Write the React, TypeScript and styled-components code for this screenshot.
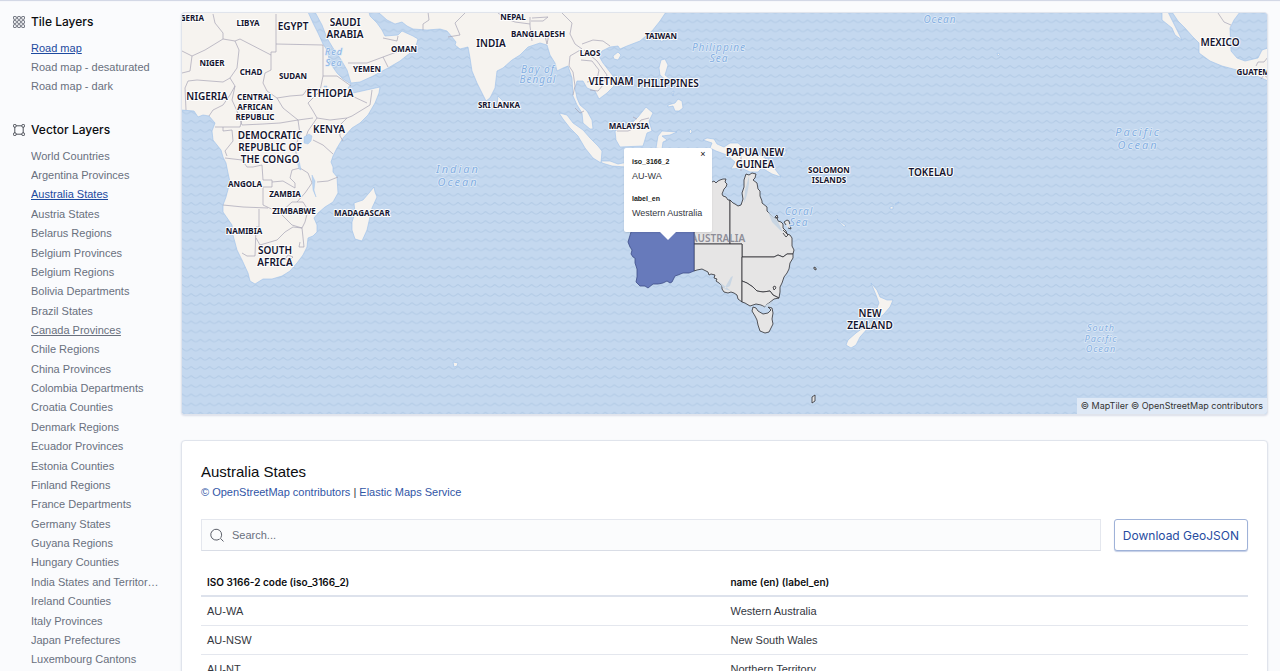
import React from "react";
import styled, { createGlobalStyle } from "styled-components";

const GlobalStyle = createGlobalStyle`
  * { box-sizing: border-box; }
  html { scrollbar-width: none; }
  body {
    margin: 0;
    background: #fafbfd;
    color: #343741;
    font-family: "Liberation Sans", Arial, sans-serif;
    font-size: 11px;
    line-height: 16px;
  }
`;

const Page = styled.div`
  display: grid;
  grid-template-columns: 168px minmax(0, 1fr);
  padding: 12px 12px 12px 13px;
  box-shadow: inset 0 2px 1px -1px #cfd4e4;
`;

const Sidebar = styled.nav`
  display: flex;
  flex-direction: column;
  gap: 24px;
  padding-right: 20px;
`;

const NavGroup = styled.section`
  display: grid;
  grid-template-columns: 12px minmax(0, 1fr);
  column-gap: 6px;
  row-gap: 6px;
  align-items: center;
`;

const NavTitle = styled.h2`
  margin: 0;
  color: #0c0d10;
  font-family: Inter, "Liberation Sans", sans-serif;
  font-size: 12px;
  font-weight: 500;
  line-height: 20px;
`;

const NavList = styled.ul<{ $minHeight: number }>`
  display: grid;
  grid-column: 2;
  grid-auto-rows: 1fr;
  align-items: center;
  min-height: ${(p) => p.$minHeight}px;
  margin: 0;
  padding: 0;
  list-style: none;
`;

const NavItem = styled.li`
  min-width: 0;
  line-height: 16px;
`;

const NavLink = styled.a<{ $active?: boolean; $underlined?: boolean }>`
  display: block;
  overflow: hidden;
  color: ${(p) => (p.$active ? "#1d4a9f" : "#69707d")};
  text-decoration: ${(p) => (p.$active || p.$underlined ? "underline" : "none")};
  text-overflow: ellipsis;
  white-space: nowrap;
  &:hover { text-decoration: underline; }
`;

const Main = styled.main`
  display: flex;
  flex-direction: column;
  gap: 25px;
  min-width: 0;
`;

const Panel = styled.section`
  border: 1px solid #e0e4ec;
  border-radius: 4px;
  background: #fff;
  box-shadow: 0 1px 2px #d9dde8;
`;

const MapPanel = styled(Panel)`
  position: relative;
  height: 403px;
  overflow: hidden;
  background: #c4d8ef;
`;

const MapDrawing = styled.svg`
  display: block;
  width: 100%;
  height: 100%;
`;

const Attribution = styled.p`
  position: absolute;
  right: 0;
  bottom: 0;
  margin: 0;
  padding: 0 4px;
  background: #dfe9f6;
  color: #333;
  font-family: Inter, "Liberation Sans", sans-serif;
  font-size: 9px;
  line-height: 16px;
`;

const Popup = styled.div`
  position: absolute;
  top: 135px;
  left: 442px;
  width: 88px;
  padding: 7px 8px 12px;
  border-radius: 2px;
  background: #fff;
  box-shadow: 0 1px 2px #0000001a;
  &::after {
    content: "";
    position: absolute;
    top: 100%;
    left: 36px;
    border: 8px solid transparent;
    border-top-color: #fff;
    border-bottom-width: 0;
  }
`;

const PopupClose = styled.button`
  position: absolute;
  top: 0;
  right: 3px;
  width: 12px;
  height: 12px;
  padding: 0;
  border: 0;
  background: none;
  color: #111;
  font-size: 9px;
  line-height: 12px;
`;

const PopupList = styled.dl`
  margin: 0;
  line-height: 14px;
  dt {
    color: #1a1c21;
    font-size: 7px;
    font-weight: 700;
  }
  dd {
    margin: 0;
    font-size: 9px;
    white-space: nowrap;
  }
  dd + dt { margin-top: 9px; }
`;

const Details = styled(Panel)`
  padding: 20px 19px;
`;

const Title = styled.h1`
  margin: 0;
  color: #0c0d10;
  font-size: 15px;
  font-weight: 400;
  line-height: 22px;
`;

const Credits = styled.p`
  margin: 0;
  line-height: 18px;
  a { color: #3156a6; text-decoration: none; }
`;

const Toolbar = styled.div`
  display: flex;
  gap: 13px;
  margin: 18px 0 17px;
`;

const SearchBox = styled.label`
  display: flex;
  flex: 1;
  align-items: center;
  gap: 8px;
  height: 32px;
  padding: 0 8px;
  border: 1px solid #e4e7ee;
  border-bottom-color: #d9dde6;
  background: #fbfcfd;
`;

const SearchInput = styled.input`
  flex: 1;
  min-width: 0;
  padding: 0;
  border: 0;
  outline: 0;
  background: none;
  font: inherit;
  &::placeholder { color: #69707d; opacity: 1; }
`;

const DownloadButton = styled.button`
  height: 32px;
  padding: 0 8px;
  border: 1px solid #9fb2d8;
  border-radius: 3px;
  background: #fff;
  box-shadow: 0 1px 1px #c3cee6;
  color: #274c9f;
  font: 400 12px Inter, "Liberation Sans", sans-serif;
`;

const DataTable = styled.table`
  width: 100%;
  border-collapse: separate;
  border-spacing: 0;
  table-layout: fixed;
  th, td { height: 29px; padding: 0 6px; text-align: left; }
  th {
    border-bottom: 2px solid #dde2ec;
    color: #0c0d10;
    font-family: Inter, "Liberation Sans", sans-serif;
    font-size: 10px;
    font-weight: 600;
  }
  td { border-bottom: 1px solid #e4e7ee; }
`;

const Land = styled.path`
  fill: #f6f3ef;
  stroke: #9cc0ea;
  stroke-width: 0.6;
`;

const Border = styled.path`
  fill: none;
  stroke: #a6a3b4;
  stroke-width: 0.7;
  stroke-linejoin: round;
`;

const Lake = styled.path`
  fill: #bcd5f0;
  stroke: #9cc0ea;
  stroke-width: 0.4;
`;

const State = styled.path<{ $selected?: boolean }>`
  fill: ${(p) => (p.$selected ? "#677abb" : "#e6e5e5")};
  stroke: ${(p) => (p.$selected ? "#3d4c86" : "#2f2f33")};
  stroke-width: 0.8;
  stroke-linejoin: round;
`;

const Country = styled.text<{ $size: number; $faded?: boolean }>`
  fill: ${(p) => (p.$faded ? "#8e8e98" : "#14142e")};
  stroke: ${(p) => (p.$faded ? "none" : "#fffffff0")};
  stroke-width: 2px;
  stroke-linejoin: round;
  paint-order: stroke;
  font-family: "Noto Sans", sans-serif;
  font-size: ${(p) => p.$size}px;
  font-weight: ${(p) => (p.$size > 8 ? 600 : 700)};
  text-anchor: middle;
`;

const Sea = styled.text<{ $size: number }>`
  fill: #84afe2;
  stroke: #dfeaf7;
  stroke-width: 1.5px;
  stroke-linejoin: round;
  paint-order: stroke;
  font-family: "Noto Sans", sans-serif;
  font-size: ${(p) => p.$size}px;
  font-style: italic;
  letter-spacing: ${(p) => (p.$size > 10 ? 2 : 1)}px;
  text-anchor: middle;
`;

const landShapes = [
  // Africa
  "M181 12H308L313 23L318 33L323 44L327 50L330 63L337 73L343 79L351 84L348 88L353 93L362 91L380 87L379 93L375 103L368 115L360 123L352 128L343 138L337 148L333 156L331 162L333 167V172L337 177L338 193L333 202L325 207L318 213L314 218L317 225V232L313 236L308 238L307 247L303 255L297 263L290 271L282 276L272 279H263L255 284L250 281L248 273L242 260L237 250L233 235L232 225L223 212V205L226 197L230 182L228 173L226 163L223 157L221 150L213 140L212 131L215 123L209 116L203 115L198 117L194 111L181 110Z",
  // Madagascar
  "M374 187L375 192L377 197L372 208L367 230L362 241L355 239L352 230V222L355 213L354 203L363 200L369 193Z",
  // Arabian peninsula
  "M315 12L322 25L327 38L333 48L340 58L347 70L351 83L360 82L373 76L388 68L400 61L410 53L416 46L418 39L413 36L402 31L398 35L385 36L382 30L377 23L370 16L369 12Z",
  // Southern and eastern Asia
  "M378 12L387 20L395 24L402 22L407 26L413 29L427 30L440 29L447 31L452 37L456 42L455 45L460 49L468 47L470 58L472 71L477 83L482 93L486 101L490 98L495 88L497 71L503 68L512 60L520 55L528 47L540 43L547 45L550 55L555 63L557 71L563 68L568 66L572 78L573 96L577 105L582 113L583 123L590 129H593L592 120L587 111L580 105L577 98L575 88L577 81H583L587 88L595 91L599 99L607 93L614 86L613 76L603 63L599 56L602 51L610 47L618 46L620 49L627 46L640 41L652 31L660 21L666 12Z",
  // Sri Lanka, Hainan, Taiwan
  "M498 96L503 101V108L499 110L497 105Z",
  "M613 56L618 52L621 55L618 60L614 59Z",
  "M660 36L664 32L663 41L661 42Z",
  // Philippines
  "M661 60L665 59L668 65L665 75L670 79L668 82L660 75L659 68Z",
  "M669 84L673 85L671 89ZM676 80L679 83L677 87ZM672 92L674 91L673 96ZM665 82L668 83L666 85Z",
  "M668 105L675 103L678 99L682 101L683 108L679 111H675L673 106L668 107Z",
  // Sumatra, Java and the islands to the east
  "M559 113L567 115L573 123L583 130L590 138L598 146L602 151L601 163L593 158L585 148L578 136L570 128L563 119Z",
  "M601 161H610L618 164L628 162L632 166L626 167L612 166L602 163Z",
  "M615 131L620 128L630 125L638 117L646 107L653 113L649 121L652 131L647 133L643 146L620 147L616 140Z",
  "M658 136L662 131L677 132L670 135L662 136L667 140L663 142L662 149L656 148Z",
  "M690 129L692 131L691 134L689 132Z",
  // New Guinea and New Britain
  "M703 140L707 138L714 139L717 144L724 147L730 143H738L744 148L755 152L765 158L768 163L775 169L781 177L772 174L762 168L758 172H750L741 168L731 169L735 162L727 155L716 151L710 148L712 143Z",
  "M775 157L785 155L787 150L784 152L775 155Z",
  // Pacific islands
  "M800 159L802 162L800 161Z",
  "M837 219L846 226L844 227Z",
  "M890 207L893 206V209L890 209ZM895 204L899 202L896 204Z",
  "M997 53L1000 54L998 56Z",
  "M453 362L458 363L457 366L454 367Z",
  // New Zealand
  "M871 283L877 290L880 297L887 300H893L890 307L883 315L878 318L874 313L877 308L879 303L876 295Z",
  "M873 320L868 328L860 337L856 345L851 348L846 345L848 340L856 333L867 325Z",
  // Mexico
  "M1172 12L1178 21L1185 28L1192 36L1199 43V53L1210 61L1222 66L1237 70L1257 76L1268 81V48L1262 50L1258 58L1245 61L1237 58L1231 51L1230 28L1234 20L1240 12Z",
  "M1162 12H1168L1174 24L1182 40L1175 35L1172 28L1162 20Z",
];

const borders =
  "M213 14L215 23L223 33V39L205 50L192 56L182 51M223 39L235 41L240 39L271 55V52H276V14M276 44L323 45V76L320 91L308 103L313 111L317 118L330 120L347 118L352 116L370 105L372 90M323 76H337L351 86M352 96L367 103" +
  "M271 55V70L265 73L263 83L267 91L277 98L290 96L303 95L308 88L313 91M235 41L239 50L237 68L230 78L223 82L210 81L197 80L188 81L185 88L186 110M192 56L190 71L182 73" +
  "M230 78L235 86L230 95L223 105L213 110L209 116M235 86L232 100L237 111L242 125L263 124L280 123L298 120L283 108L277 98M298 120L313 118M215 127H240L242 119M223 127V131L232 130L233 141L225 151L227 156M317 118L308 131L305 140" +
  "M313 140L323 145L333 154M347 118L340 125V136L343 141M298 120L300 134L296 145V153" +
  "M225 158L242 160L247 167H253L262 165L263 180H272V187H263V205L280 213L292 202H303L308 210L305 222L302 228L292 225L285 218L280 213M223 205L243 207L268 208M259 209V227H256L255 256H247L242 253M256 238L260 245L277 240L285 232L293 227L302 228L304 247H299L300 242" +
  "M272 182L283 181L295 188V183L290 178L292 170L300 168L308 173L312 183L305 193L297 202M317 182L328 181L338 177M288 255L293 257L289 261L285 259Z" +
  "M348 63H367L383 57L402 50M383 57L388 67M383 38L397 41L398 36M428 12L429 20L423 24V30" +
  "M465 13L455 23L460 35L448 37M498 13L507 19L515 22L530 24M530 17V26L532 41M531 21H543L548 17L532 18M545 36L547 44L549 34M562 13L572 23L570 34L575 44L582 49L570 56L569 66L573 72L575 86L573 95M582 44L593 40L603 41L610 46M584 50L597 61L607 75L604 82M581 60L592 61L599 70L597 80L587 82M575 108L580 113L584 111M590 90L598 91L603 85" +
  "M617 131H628L635 128L641 120L649 118M633 117L637 119M741 147V171M1218 13L1224 22L1231 25M1256 66L1258 62H1264L1268 57M1261 79L1264 75L1268 78";

const lakes = [
  "M304 137L309 134L312 136L311 141L308 144L304 143Z",
  "M296 153L299 160L301 170L299 169L297 161Z",
  "M312 175L315 181L314 190L316 197L313 190Z",
  "M324 86H327V87H324Z",
];

const australia = [
  "M694 182L712 182L714 181L716 183L718 181L720 180L723 179L726 179L725 182L727 184L726 187L724 189L722 194L723 196L726 197L728 200L730 200V244H694Z",
  "M730 200L733 203L735 204L738 206L741 205L743 199L742 193L744 187L744 180L746 174L749 175L752 173L756 174L755 178L753 180L757 183L758 189L760 191L760 196L762 201L762 203L767 207L767 211L770 214L772 216L774 218L777 218L778 221L781 222L783 224L783 228L786 231L787 234L790 235L792 238L792 246L794 250L793 254L787 254L783 257L778 255L774 257L742 257V244H730Z",
  "M694 244H742V302L738 299L737 295L734 293L731 292L728 293L724 292L722 289L722 286L719 283L716 281L717 279L714 278L715 275L711 274L709 275L708 272L704 270L702 269L697 270L694 271Z",
  "M742 257H774L778 255L783 257L787 254L793 254L793 258L790 263L789 269L787 273L784 277L782 283L780 287L780 292L779 298L773 295L770 291L763 292L757 291L753 287L750 285L747 283L742 281Z",
  "M742 281L747 283L750 285L753 287L757 291L763 292L770 291L773 295L779 298L774 299L769 303L766 305L765 307L761 305L756 304L750 306L745 303L742 302Z",
  "M753 307L756 308L758 311L763 314L768 313L771 310L768 307L772 308L773 313L772 319L773 324L771 328L769 332L765 333L760 331L758 325L757 320L755 316L752 311Z",
  "M775 286L776 288L774 290L773 287ZM775 217L777 215L778 218ZM784 222L787 220L789 221L791 229L788 228M786 225L784 222",
  "M783 230L788 235L786 237L783 233M814 267L816 268L816 270L814 269ZM812 397L815 395V401L812 403Z",
];

const shallows =
  "M749 176L745 190L744 203L747 195L749 184ZM768 212L777 220L783 232L780 230L772 222ZM731 277L733 276L730 286L724 289ZM718 281L724 289L731 291L726 287ZM755 305L762 307L773 301L768 307Z";

type Label = [string, number, number, number];

const countryLabels: Label[] = [
  ["ALGERIA", 187, 21, 8], ["LIBYA", 248, 26, 8], ["EGYPT", 293, 30, 10],
  ["SAUDI", 345, 26, 10], ["ARABIA", 345, 38, 10], ["OMAN", 404, 52, 8],
  ["NIGER", 212, 66, 8], ["CHAD", 251, 75, 8], ["SUDAN", 293, 79, 8], ["YEMEN", 367, 72, 8],
  ["NIGERIA", 207, 100, 10], ["CENTRAL", 255, 100, 8], ["AFRICAN", 255, 110, 8], ["REPUBLIC", 255, 120, 8],
  ["ETHIOPIA", 330, 97, 10], ["KENYA", 329, 133, 10],
  ["DEMOCRATIC", 270, 139, 10], ["REPUBLIC OF", 270, 151, 10], ["THE CONGO", 270, 163, 10],
  ["ANGOLA", 245, 187, 8], ["ZAMBIA", 285, 197, 8], ["ZIMBABWE", 294, 214, 8],
  ["MADAGASCAR", 362, 216, 8], ["NAMIBIA", 244, 234, 8], ["SOUTH", 275, 254, 10], ["AFRICA", 275, 266, 10],
  ["NEPAL", 513, 20, 8], ["BANGLADESH", 538, 37, 8], ["INDIA", 491, 47, 10], ["LAOS", 590, 56, 8],
  ["TAIWAN", 661, 39, 8], ["VIETNAM", 611, 85, 10], ["PHILIPPINES", 668, 87, 10], ["SRI LANKA", 499, 108, 8],
  ["MALAYSIA", 629, 129, 8], ["PAPUA NEW", 755, 156, 10], ["GUINEA", 755, 168, 10],
  ["SOLOMON", 829, 173, 8], ["ISLANDS", 829, 183, 8], ["TOKELAU", 931, 176, 10],
  ["NEW", 870, 317, 10], ["ZEALAND", 870, 329, 10], ["MEXICO", 1220, 46, 10], ["GUATEMALA", 1261, 75, 8],
];

const seaLabels: Label[] = [
  ["Red", 334, 55, 9], ["Sea", 334, 66, 9], ["Bay of", 538, 73, 10], ["Bengal", 538, 83, 10],
  ["Philippine", 719, 51, 10], ["Sea", 719, 62, 10], ["Indian", 458, 173, 11], ["Ocean", 458, 186, 11],
  ["Coral", 799, 215, 10], ["Sea", 799, 226, 10], ["Ocean", 940, 23, 10],
  ["Pacific", 1138, 136, 11], ["Ocean", 1138, 149, 11],
  ["South", 1101, 331, 9], ["Pacific", 1101, 342, 9], ["Ocean", 1101, 352, 9],
];

const WorldMap = () => (
  <MapDrawing viewBox="182 13 1085 401" preserveAspectRatio="xMinYMin slice" role="img" aria-label="Map">
    <defs>
      <pattern id="waves" x="182" y="16" width="9.2" height="9.12" patternUnits="userSpaceOnUse">
        <path d="M0 4.2C1.4 4.4 2 6.6 4.6 6.6S7.8 4.4 9.2 4.2" fill="none" stroke="#b3cbe6" strokeWidth="1.1" />
      </pattern>
    </defs>
    <rect x="182" y="13" width="100%" height="100%" fill="#c4d8ef" />
    <rect x="182" y="13" width="100%" height="100%" fill="url(#waves)" />
    {landShapes.map((d) => <Land key={d} d={d} />)}
    <Border d={borders} />
    {lakes.map((d) => <Lake key={d} d={d} />)}
    {australia.map((d) => <State key={d} d={d} />)}
    <path d={shallows} fill="#c9d6e3" />
    <Country $size={10} $faded x={718} y={242}>AUSTRALIA</Country>
    <State $selected d="M694 225H634L631 232L628 242L630 247L632 250L631 254L633 257L635 258L635 263L637 269L637 277L636 282L640 286L645 286L648 288L653 284L658 284L663 283L667 281L670 283L672 282L675 276L678 275L683 273L689 273L694 271Z" />
    {seaLabels.map(([name, x, y, size]) => <Sea key={name + x + y} x={x} y={y} $size={size}>{name}</Sea>)}
    {countryLabels.map(([name, x, y, size]) => <Country key={name + x + y} x={x} y={y} $size={size}>{name}</Country>)}
  </MapDrawing>
);

const TilesIcon = () => (
  <svg width="12" height="12" viewBox="0 0 12 12" fill="none" stroke="#5a5f6b" strokeWidth="0.9" aria-hidden="true">
    {[0.5, 4.6, 8.7].map((y) => [0.5, 4.6, 8.7].map((x) => (
      <rect key={`${x} ${y}`} x={x} y={y} width="2.8" height="2.8" rx="0.6" />
    )))}
  </svg>
);

const VectorIcon = () => (
  <svg width="12" height="12" viewBox="0 0 12 12" fill="none" stroke="#3c404a" strokeWidth="0.9" aria-hidden="true">
    <path d="M3 1.8H9M3 10.2H9M1.8 3V9M10.2 3V9" />
    {[0.5, 8.9].map((y) => [0.5, 8.9].map((x) => (
      <rect key={`${x} ${y}`} x={x} y={y} width="2.6" height="2.6" rx="0.8" fill="#fafbfd" />
    )))}
  </svg>
);

const SearchIcon = () => (
  <svg width="14" height="14" viewBox="0 0 14 14" fill="none" stroke="#4a4e59" strokeWidth="0.9" strokeLinecap="round" aria-hidden="true">
    <path d="M9.3 11.3A5.5 5.5 0 1 1 11 9.5M10.6 10.5L13.2 13.2" />
  </svg>
);

const tileLayers = ["Road map", "Road map - desaturated", "Road map - dark"];

const vectorLayers = [
  "World Countries", "Argentina Provinces", "Australia States", "Austria States", "Belarus Regions",
  "Belgium Provinces", "Belgium Regions", "Bolivia Departments", "Brazil States", "Canada Provinces",
  "Chile Regions", "China Provinces", "Colombia Departments", "Croatia Counties", "Denmark Regions",
  "Ecuador Provinces", "Estonia Counties", "Finland Regions", "France Departments", "Germany States",
  "Guyana Regions", "Hungary Counties", "India States and Territories", "Ireland Counties",
  "Italy Provinces", "Japan Prefectures", "Luxembourg Cantons",
];

const rows = [
  ["AU-WA", "Western Australia"],
  ["AU-NSW", "New South Wales"],
  ["AU-NT", "Northern Territory"],
];

interface LayerGroupProps {
  title: string;
  icon: React.ReactNode;
  layers: string[];
  active: string;
  underlined?: string;
  minHeight: number;
}

const LayerGroup = ({ title, icon, layers, active, underlined, minHeight }: LayerGroupProps) => (
  <NavGroup>
    {icon}
    <NavTitle>{title}</NavTitle>
    <NavList $minHeight={minHeight}>
      {layers.map((name) => (
        <NavItem key={name}>
          <NavLink href="#" $active={name === active} $underlined={name === underlined}>{name}</NavLink>
        </NavItem>
      ))}
    </NavList>
  </NavGroup>
);

export default function App() {
  return (
    <>
      <GlobalStyle />
      <Page>
        <Sidebar aria-label="Layers">
          <LayerGroup title="Tile Layers" icon={<TilesIcon />} layers={tileLayers} active="Road map" minHeight={58} />
          <LayerGroup
            title="Vector Layers"
            icon={<VectorIcon />}
            layers={vectorLayers}
            active="Australia States"
            underlined="Canada Provinces"
            minHeight={523}
          />
        </Sidebar>
        <Main>
          <MapPanel>
            <WorldMap />
            <Popup>
              <PopupClose type="button" aria-label="Close popup">×</PopupClose>
              <PopupList>
                <dt>iso_3166_2</dt>
                <dd>AU-WA</dd>
                <dt>label_en</dt>
                <dd>Western Australia</dd>
              </PopupList>
            </Popup>
            <Attribution>© MapTiler © OpenStreetMap contributors</Attribution>
          </MapPanel>
          <Details>
            <Title>Australia States</Title>
            <Credits>
              <a href="#">© OpenStreetMap contributors</a> | <a href="#">Elastic Maps Service</a>
            </Credits>
            <Toolbar>
              <SearchBox>
                <SearchIcon />
                <SearchInput type="search" placeholder="Search..." aria-label="Search" />
              </SearchBox>
              <DownloadButton type="button">Download GeoJSON</DownloadButton>
            </Toolbar>
            <DataTable>
              <thead>
                <tr>
                  <th scope="col">ISO 3166-2 code (iso_3166_2)</th>
                  <th scope="col">name (en) (label_en)</th>
                </tr>
              </thead>
              <tbody>
                {rows.map(([code, name]) => (
                  <tr key={code}>
                    <td>{code}</td>
                    <td>{name}</td>
                  </tr>
                ))}
              </tbody>
            </DataTable>
          </Details>
        </Main>
      </Page>
    </>
  );
}
